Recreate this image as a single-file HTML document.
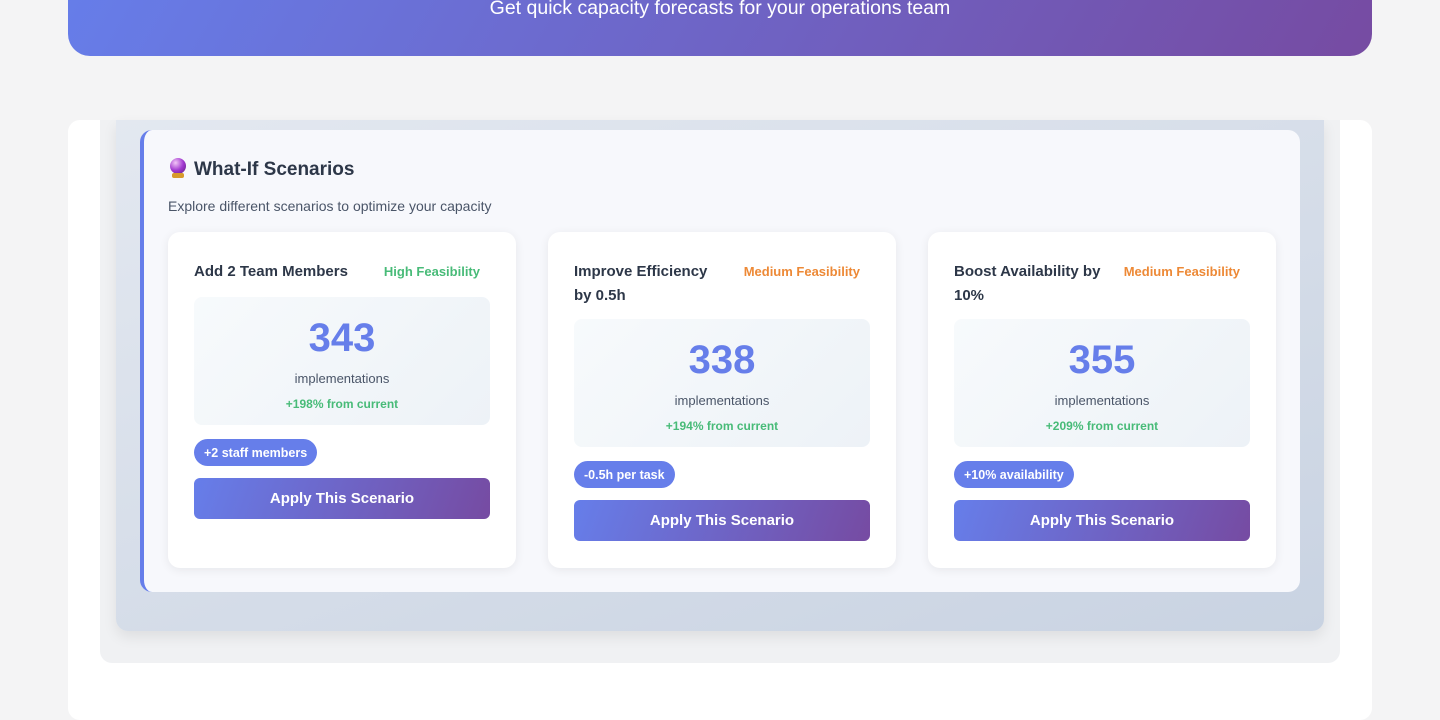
<!DOCTYPE html>
<html><head><meta charset="utf-8"><style>
*{box-sizing:border-box;margin:0;padding:0}
body{width:1440px;height:700px;overflow:hidden;background:#f4f4f5;font-family:"Liberation Sans",sans-serif;position:relative}
.hdr{position:absolute;left:68px;top:-40px;width:1304px;height:96px;border-radius:0 0 22px 22px;background:linear-gradient(120deg,#667eea,#764ba2);color:#fff;text-align:center;font-size:19.5px;padding-top:37px}
.wc{position:absolute;left:68px;top:120px;width:1304px;height:600px;background:#fff;border-radius:12px}
.gray{position:absolute;left:100px;top:120px;width:1240px;height:543px;background:#f0f1f3;border-radius:0 0 12px 12px}
.grad{position:absolute;left:116px;top:120px;width:1208px;height:511px;background:linear-gradient(160deg,#e3e8f0,#c9d3e2);border-radius:0 0 12px 12px;box-shadow:0 6px 14px rgba(0,0,0,.08)}
.panel{position:absolute;left:140px;top:130px;width:1160px;height:462px;background:#f7f8fc;border-radius:12px;border-left:4px solid #667eea}
h2{position:absolute;left:168px;top:158px;font-size:19px;color:#2d3748;font-weight:bold;line-height:24px}
.orb{display:inline-block;width:20px;height:20px;vertical-align:-3px;margin-right:6px;position:relative}
.orb:before{content:"";position:absolute;left:2px;top:0;width:16px;height:16px;border-radius:50%;background:radial-gradient(circle at 35% 30%,#f3c6f7,#a23ad0 50%,#5b1a7a)}
.orb:after{content:"";position:absolute;left:4px;top:15px;width:12px;height:5px;background:#d79a2b;border-radius:2px}
.sub{position:absolute;left:168px;top:198px;font-size:14px;color:#4a5568}
.card{position:absolute;top:232px;width:348px;height:336px;background:#fff;border-radius:12px;box-shadow:0 2px 10px rgba(0,0,0,.07);padding:28px 26px 26px}
.row{display:flex;justify-content:space-between;align-items:flex-start}
.t{font-size:15px;font-weight:bold;color:#2d3748;line-height:24px;width:140px}
.f{font-size:13px;font-weight:bold;line-height:24px;padding-right:10px}
.stat{margin-top:13px;height:128px;border-radius:8px;background:linear-gradient(135deg,#f7fafc,#edf2f7);text-align:center;padding-top:19px}
.two .stat{margin-top:11px}
.n{font-size:40px;font-weight:bold;color:#667eea;line-height:44px}
.l{font-size:13px;color:#4a5568;line-height:20px;margin-top:9px}
.c{font-size:12px;color:#48bb78;font-weight:bold;line-height:20px;margin-top:5px}
.b{display:inline-block;margin-top:14px;height:27px;line-height:28px;padding:0 10px;border-radius:14px;background:#667eea;color:#fff;font-size:12.5px;font-weight:bold}
.btn{margin-top:12px;height:41px;line-height:42px;border-radius:6px;background:linear-gradient(110deg,#667eea,#764ba2);color:#fff;text-align:center;font-size:15px;font-weight:bold}
</style></head><body>
<div class="hdr">Get quick capacity forecasts for your operations team</div>
<div class="wc"></div>
<div class="gray"></div>
<div class="grad"></div>
<div class="panel"></div>
<h2><span class="orb"></span>What-If Scenarios</h2>
<div class="sub">Explore different scenarios to optimize your capacity</div>
<div class="card" style="left:168px"><div class="row"><div class="t" style="width:170px">Add 2 Team Members</div><div class="f" style="color:#48bb78">High Feasibility</div></div>
<div class="stat"><div class="n">343</div><div class="l">implementations</div><div class="c">+198% from current</div></div>
<span class="b">+2 staff members</span><div class="btn">Apply This Scenario</div></div>
<div class="card two" style="left:548px"><div class="row"><div class="t">Improve Efficiency by 0.5h</div><div class="f" style="color:#ed8936">Medium Feasibility</div></div>
<div class="stat"><div class="n">338</div><div class="l">implementations</div><div class="c">+194% from current</div></div>
<span class="b">-0.5h per task</span><div class="btn">Apply This Scenario</div></div>
<div class="card two" style="left:928px"><div class="row"><div class="t" style="width:155px">Boost Availability by 10%</div><div class="f" style="color:#ed8936">Medium Feasibility</div></div>
<div class="stat"><div class="n">355</div><div class="l">implementations</div><div class="c">+209% from current</div></div>
<span class="b">+10% availability</span><div class="btn">Apply This Scenario</div></div>
</body></html>
